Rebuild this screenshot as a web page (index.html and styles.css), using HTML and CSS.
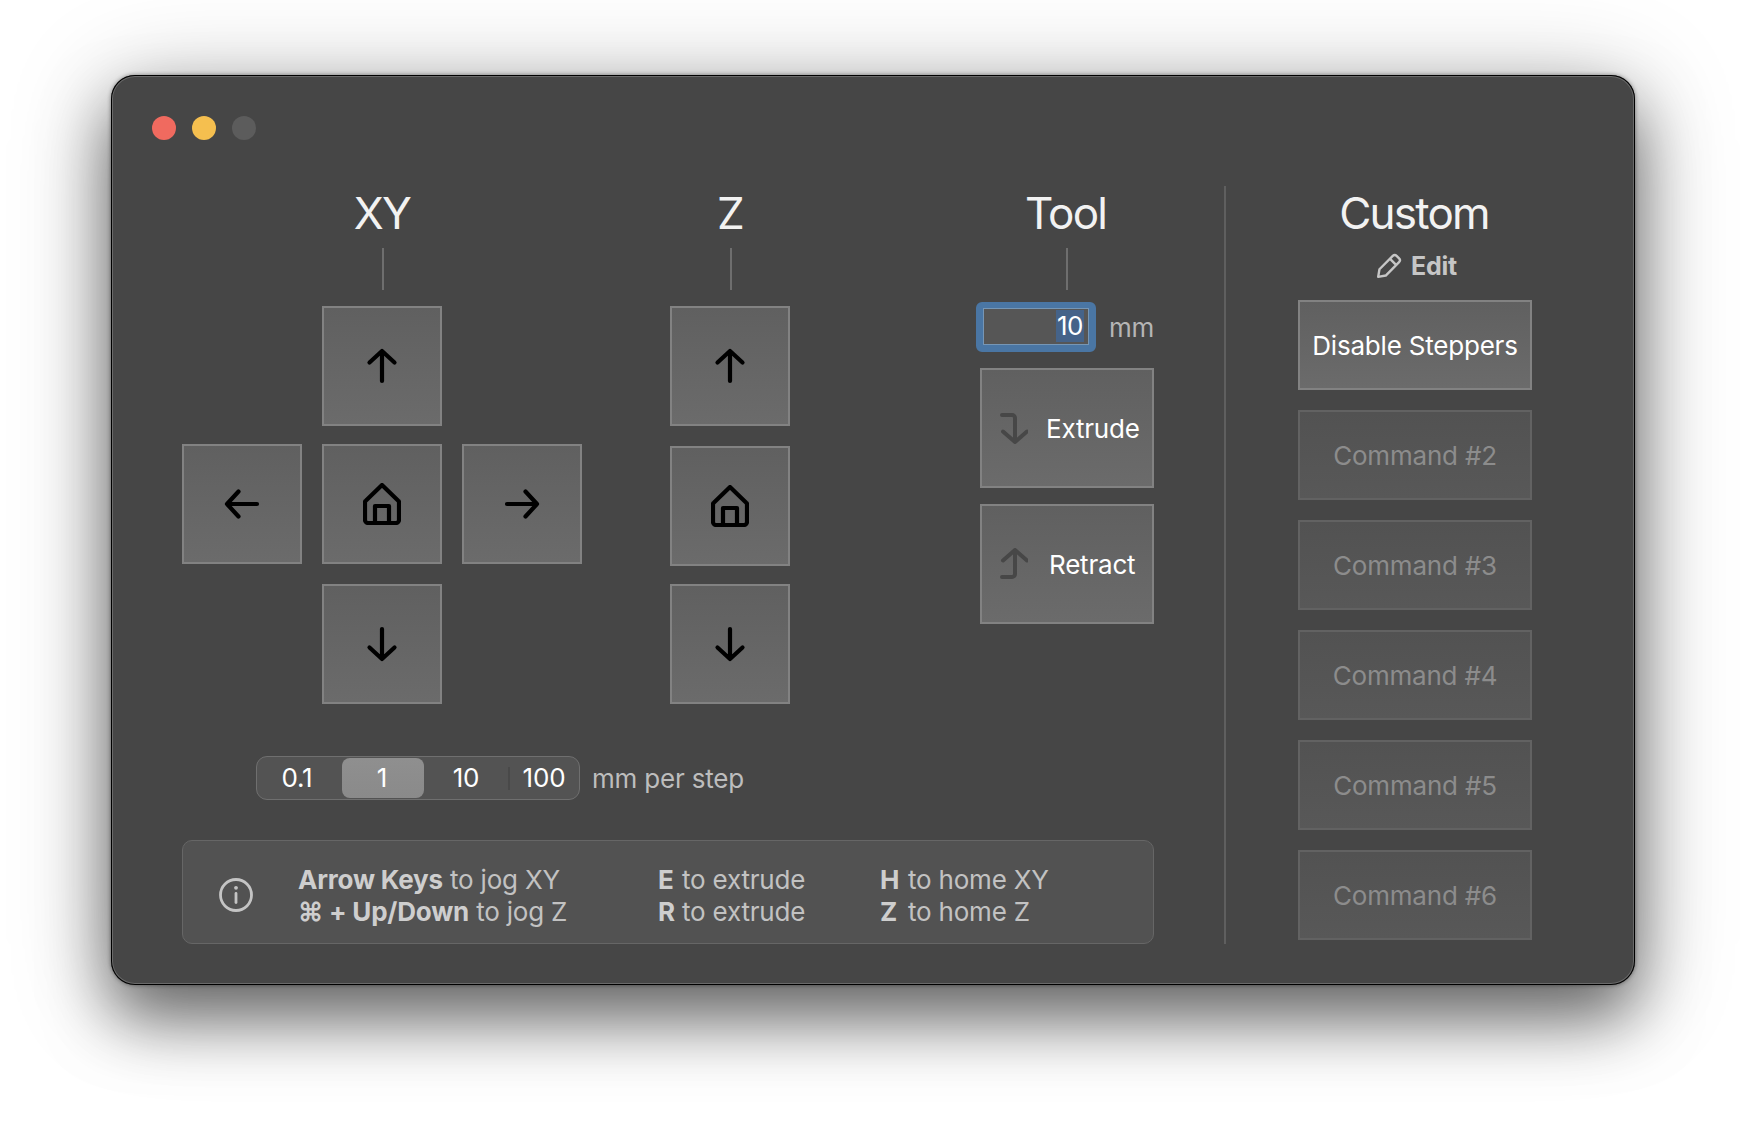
FILE: index.html
```html
<!DOCTYPE html>
<html lang="en">
<head>
<meta charset="utf-8">
<title>Jog Controls</title>
<link rel="stylesheet" href="styles.css">
</head>
<body>
<div class="window">
  <div class="lights">
    <span class="light red"></span>
    <span class="light yellow"></span>
    <span class="light grey"></span>
  </div>
  <div class="content">
    <div class="left">
      <div class="controls">
        <section class="col col-xy">
          <h2 class="title">XY</h2>
          <div class="tick"></div>
          <div class="pad">
            <button class="btn cell-up"><svg class="ico arrow" viewBox="0 0 32 36"><path d="M16 33V3M3.5 14.5 16 3l12.500 11.500"/></svg></button>
            <button class="btn cell-left"><svg class="ico arrow-h" viewBox="0 0 36 32"><path d="M33 16H3M14.500 3.500 3 16l11.500 12.500"/></svg></button>
            <button class="btn cell-home"><svg class="ico home" viewBox="0 0 38 42"><path d="M19 2 3 17.500a2 2 0 0 0-1 2V37a3 3 0 0 0 3 3h28a3 3 0 0 0 3-3V19.500a2 2 0 0 0-1-2ZM12 40V23h14v17"/></svg></button>
            <button class="btn cell-right"><svg class="ico arrow-h" viewBox="0 0 36 32"><path d="M3 16h30M21.500 3.500 33 16 21.500 28.500"/></svg></button>
            <button class="btn cell-down"><svg class="ico arrow" viewBox="0 0 32 36"><path d="M16 3v30M3.500 21.500 16 33l12.500-11.500"/></svg></button>
          </div>
        </section>
        <section class="col col-z">
          <h2 class="title">Z</h2>
          <div class="tick"></div>
          <div class="stack">
            <button class="btn"><svg class="ico arrow" viewBox="0 0 32 36"><path d="M16 33V3M3.5 14.5 16 3l12.500 11.500"/></svg></button>
            <button class="btn"><svg class="ico home" viewBox="0 0 38 42"><path d="M19 2 3 17.500a2 2 0 0 0-1 2V37a3 3 0 0 0 3 3h28a3 3 0 0 0 3-3V19.500a2 2 0 0 0-1-2ZM12 40V23h14v17"/></svg></button>
            <button class="btn"><svg class="ico arrow" viewBox="0 0 32 36"><path d="M16 3v30M3.500 21.500 16 33l12.500-11.500"/></svg></button>
          </div>
        </section>
        <section class="col col-tool">
          <h2 class="title">Tool</h2>
          <div class="tick"></div>
          <div class="amount">
            <div class="field"><span class="selected">10</span></div>
            <span class="unit">mm</span>
          </div>
          <button class="btn btn-tool btn-extrude"><svg class="ico tool-ico" viewBox="0 0 28 32"><path d="M2 3h10a3 3 0 0 1 3 3v24M3 19.500 15 30l12-10.500"/></svg><span>Extrude</span></button>
          <button class="btn btn-tool btn-retract"><svg class="ico tool-ico" viewBox="0 0 28 32"><path d="M2 29h10a3 3 0 0 0 3-3V2M3 12.500 15 2l12 10.500"/></svg><span>Retract</span></button>
        </section>
      </div>
      <div class="step-row">
        <div class="segments">
          <span class="seg seg-a">0.1</span>
          <span class="seg seg-b active">1</span>
          <span class="seg seg-c">10</span>
          <span class="seg-sep"></span>
          <span class="seg seg-d">100</span>
        </div>
        <span class="step-label">mm per step</span>
      </div>
      <div class="info">
        <svg class="info-ico" viewBox="0 0 36 36"><circle cx="18" cy="18" r="15.500"/><path d="M18 16.500v9"/><circle class="dot" cx="18" cy="10.800" r="1.900"/></svg>
        <div class="hints hints-a">
          <div><b>Arrow Keys</b> to jog XY</div>
          <div><b>⌘ + Up/Down</b> to jog Z</div>
        </div>
        <div class="hints hints-b">
          <div><b>E</b>to extrude</div>
          <div><b>R</b>to extrude</div>
        </div>
        <div class="hints hints-c">
          <div><b>H</b>to home XY</div>
          <div><b>Z</b>to home Z</div>
        </div>
      </div>
    </div>
    <div class="divider"></div>
    <aside class="custom">
      <h2 class="title">Custom</h2>
      <div class="edit"><svg class="pencil" viewBox="0 0 24 24"><path d="M2 22l1.200-7L15.500 2.700a2.500 2.500 0 0 1 3.500 0l2.300 2.300a2.500 2.500 0 0 1 0 3.500L9 20.800ZM13 5.500l5.500 5.500"/></svg><span>Edit</span></div>
      <div class="commands">
        <button class="btn btn-cmd">Disable Steppers</button>
        <button class="btn btn-cmd off">Command #2</button>
        <button class="btn btn-cmd off">Command #3</button>
        <button class="btn btn-cmd off">Command #4</button>
        <button class="btn btn-cmd off">Command #5</button>
        <button class="btn btn-cmd off">Command #6</button>
      </div>
    </aside>
  </div>
</div>
</body>
</html>
```
FILE: styles.css
```css
* { box-sizing: border-box; }
html, body { margin: 0; height: 100%; background: #fff; }
body {
  width: 1746px;
  height: 1132px;
  padding: 75px 0 0 111px;
  overflow: hidden;
  font-family: Inter, "Liberation Sans", sans-serif;
  letter-spacing: -0.2px;
}
.window {
  width: 1524px;
  height: 910px;
  background: #464646;
  border-radius: 24px;
  box-shadow:
    inset 0 0 0 1px #000,
    inset 0 0 0 2px #6a6a6a,
    0 0 4px rgba(0,0,0,.45),
    0 34px 64px rgba(0,0,0,.5),
    0 12px 100px rgba(0,0,0,.28);
  padding: 41px 0 0 41px;
}
.lights { display: flex; gap: 16px; height: 24px; }
.light { width: 24px; height: 24px; border-radius: 50%; }
.red { background: #f06a5f; }
.yellow { background: #f5bf4f; }
.grey { background: #5c5c5c; }

.content {
  display: flex;
  margin: 46px 0 0 30px;
  height: 758px;
}
.left { width: 972px; }
.controls { display: flex; height: 518px; }
.col { display: flex; flex-direction: column; align-items: center; }
.col-xy { width: 400px; margin-right: 88px; }
.col-z { width: 120px; margin-right: 190px; }
.col-tool { width: 174px; }
.title {
  margin: 0;
  flex: none;
  height: 62px;
  font-size: 44px;
  line-height: 54px;
  font-weight: 400;
  color: #f2f2f2;
  letter-spacing: -1.8px;
  white-space: nowrap;
}
.col-tool .title { margin-right: 3px; }
.custom .title { margin-right: 2px; }
.tick { width: 2px; height: 42px; background: #6e6e6e; flex: none; position: relative; left: 1px; }
.col-tool .tick { left: 0; }

.btn {
  display: flex;
  align-items: center;
  justify-content: center;
  width: 120px;
  height: 120px;
  padding: 0;
  border: 2px solid #828282;
  border-radius: 0;
  background: linear-gradient(#606060, #6b6b6b);
  font-family: inherit;
  letter-spacing: inherit;
  color: #fff;
}
.pad {
  display: grid;
  grid-template-columns: 120px 120px 120px;
  grid-template-rows: 138px 140px 120px;
  column-gap: 20px;
  margin-top: 16px;
}
.cell-up { grid-area: 1 / 2; }
.cell-left { grid-area: 2 / 1; }
.cell-home { grid-area: 2 / 2; }
.cell-right { grid-area: 2 / 3; }
.cell-down { grid-area: 3 / 2; }
.stack {
  display: grid;
  grid-template-rows: 140px 138px 120px;
  margin-top: 16px;
}

.ico { fill: none; stroke: #000; stroke-width: 4.200; stroke-linecap: round; stroke-linejoin: round; }
.arrow { width: 32px; height: 36px; }
.arrow-h { width: 36px; height: 32px; }
.home { width: 38px; height: 42px; }

.amount {
  display: flex;
  align-items: center;
  align-self: flex-start;
  margin: 12px 0 16px -4px;
  height: 50px;
}
.field {
  width: 120px;
  height: 50px;
  border-radius: 6px;
  background: #565656;
  border: 7px solid #4a76a4;
  border-top-width: 6px;
  box-shadow: inset 0 0 0 1px #7696b5;
  display: flex;
  justify-content: flex-end;
  padding: 2px 5px 3px 0;
}
.selected {
  display: block;
  width: 28px;
  height: 32px;
  line-height: 32px;
  text-align: center;
  background: #456389;
  color: #fff;
  font-size: 26px;
  letter-spacing: -0.5px;
}
.unit { margin-left: 13px; font-size: 26px; color: #b5b5b5; }

.btn-tool {
  width: 100%;
  justify-content: flex-start;
  font-size: 26px;
  flex: none;
}
.btn-extrude { margin-bottom: 16px; padding-left: 18px; }
.btn-retract { padding-left: 18px; }
.tool-ico { width: 28px; height: 32px; stroke: #474747; stroke-width: 4; flex: none; }
.btn-extrude span { margin-left: 18px; }
.btn-retract span { margin-left: 21px; }

.step-row {
  display: flex;
  align-items: center;
  margin: 52px 0 0 74px;
  height: 44px;
}
.segments {
  width: 324px;
  height: 44px;
  border-radius: 11px;
  background: #535353;
  border: 1px solid #6f6f6f;
  font-size: 26px;
  color: #fff;
  display: grid;
  grid-template-columns: 85px 82px 84px 1px 1fr;
  align-items: center;
  text-align: center;
}
.seg { line-height: 40px; }
.seg-a { padding-right: 5px; }
.seg-b { padding-right: 2px; }
.active {
  height: 40px;
  background: linear-gradient(#8f8f8f, #8a8a8a);
  border-radius: 8px;
}
.seg-sep { width: 2px; height: 23px; background: #494949; }
.step-label { margin-left: 12px; font-size: 26px; color: #bdbdbd; }

.info {
  display: flex;
  align-items: center;
  width: 972px;
  height: 104px;
  margin-top: 40px;
  padding-left: 35px;
  background: #525252;
  border: 1px solid #666;
  border-radius: 10px;
  font-size: 26px;
  line-height: 32px;
  color: #c2c2c2;
}
.info-ico {
  width: 36px;
  height: 36px;
  margin-top: 6px;
  fill: none;
  stroke: #c4c4c4;
  stroke-width: 2.800;
  stroke-linecap: round;
  flex: none;
}
.info-ico .dot { fill: #c4c4c4; stroke: none; }
.info b { font-weight: 700; color: #cecece; }
.hints { white-space: nowrap; margin-top: 8px; }
.hints-a { margin-left: 44px; width: 360px; }
.hints-b { width: 222px; }
.hints-b b { display: inline-block; width: 24px; }
.hints-c b { display: inline-block; width: 28px; }

.divider { width: 2px; height: 758px; background: #5f5f5f; margin-left: 70px; flex: none; }
.custom {
  width: 234px;
  margin-left: 72px;
  display: flex;
  flex-direction: column;
  align-items: center;
}
.edit {
  display: flex;
  align-items: center;
  gap: 9px;
  height: 30px;
  margin-top: 3px;
  margin-left: 3px;
  font-size: 25px;
  font-weight: 700;
  color: #c6c6c6;
}
.pencil { width: 26px; height: 26px; fill: none; stroke: #c6c6c6; stroke-width: 2.200; stroke-linejoin: round; }
.commands { display: flex; flex-direction: column; gap: 20px; margin-top: 19px; }
.btn-cmd { width: 234px; height: 90px; font-size: 26px; }
.off {
  background: linear-gradient(#525252, #585858);
  border-color: #626262;
  color: #8c8c8c;
}
```
